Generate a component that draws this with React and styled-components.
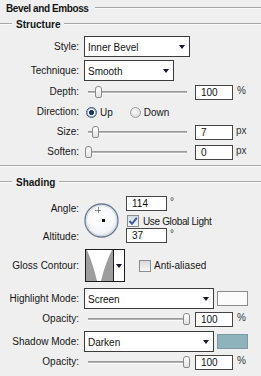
import React from 'react';
import styled, { createGlobalStyle } from 'styled-components';

const Global = createGlobalStyle`
  html, body { margin: 0; padding: 0; background: #efefef; }
  body { font-family: "Liberation Sans", Arial, sans-serif; font-size: 10px; color: #161616; }
`;

const Panel = styled.div`
  width: 261px;
  height: 376px;
  overflow: hidden;
  background: #efefef;
  display: flex;
  flex-direction: column;
`;

const lineRule = `
  content: "";
  border-top: 1px solid #a7a7a7;
  border-bottom: 1px solid #fbfbfb;
`;

const Header = styled.div`
  display: flex;
  align-items: center;
  height: 16px;
  padding-left: 6px;
  font-weight: bold;
  letter-spacing: -0.4px;
  &::after { ${lineRule} flex: 1; margin-left: 6px; }
`;

const Legend = styled.div`
  display: flex;
  align-items: center;
  height: 16px;
  font-weight: bold;
  margin-top: ${p => p.$mt || 0}px;
  &::before { ${lineRule} width: 12px; margin-right: 4px; }
  &::after { ${lineRule} flex: 1; margin-left: 4px; }
`;

const Separator = styled.div`
  margin-top: ${p => p.$mt || 0}px;
  border-top: 1px solid #a7a7a7;
  border-bottom: 1px solid #fbfbfb;
`;

const Row = styled.div`
  display: flex;
  align-items: center;
  height: ${p => p.$h || 20}px;
  margin-top: ${p => p.$mt || 0}px;
  flex: none;
`;

const Label = styled.span`
  width: 79px;
  margin-right: 5px;
  text-align: right;
  flex: none;
  padding-bottom: 1px;
  white-space: nowrap;
`;

const Select = styled.div`
  box-sizing: border-box;
  width: ${p => p.$w}px;
  height: 21px;
  border: 1px solid #3c3c3c;
  background: #fff;
  display: flex;
  align-items: center;
  justify-content: space-between;
  padding: 1px 4px 0 3px;
  color: #111;
`;

const Arrow = styled.span`
  width: 0;
  height: 0;
  border-left: 3.5px solid transparent;
  border-right: 3.5px solid transparent;
  border-top: 4px solid #161630;
`;

const Slider = styled.div`
  position: relative;
  width: 106px;
  height: 14px;
  flex: none;
`;

const Track = styled.div`
  position: absolute;
  left: 4px;
  right: 3px;
  top: 6px;
  height: 1px;
  background: #b4b4b4;
  border-top: 1px solid #9a9a9a;
  border-bottom: 1px solid #fdfdfd;
`;

const Thumb = styled.div`
  position: absolute;
  top: 1px;
  width: 7px;
  height: 12px;
  box-sizing: border-box;
  border: 1px solid #8a8a8a;
  border-radius: 3px 3px 2px 2px;
  background: linear-gradient(#ffffff, #e2e2e2);
`;

const NumBox = styled.div`
  box-sizing: border-box;
  width: ${p => p.$w || 38}px;
  height: 15px;
  margin-left: ${p => p.$ml ?? 5}px;
  border: 1px solid #454545;
  background: #fff;
  padding-left: ${p => p.$pl || 5}px;
  display: flex;
  align-items: center;
  color: #111;
  flex: none;
`;

const Unit = styled.span`
  margin-left: ${p => p.$ml ?? 4}px;
  align-self: ${p => (p.$top ? 'flex-start' : 'center')};
  padding-bottom: ${p => (p.$top ? 0 : 3)}px;
  color: #333;
`;

const Radio = styled.span`
  box-sizing: border-box;
  width: 11px;
  height: 11px;
  border-radius: 50%;
  margin-left: ${p => p.$ml || 0}px;
  flex: none;
  border: 1px solid ${p => (p.$on ? '#3d5a86' : '#9c9c9c')};
  background: ${p =>
    p.$on
      ? 'radial-gradient(circle, #1d3766 0 2.2px, #f4f6fa 2.8px 3.2px, #a8b8d0 4px)'
      : 'radial-gradient(circle at 40% 40%, #fafafa, #d4d4d4)'};
`;

const RadioText = styled.span`
  margin-left: 3px;
`;

const AngleSection = styled.div`
  display: flex;
  align-items: flex-start;
  height: 55px;
  flex: none;
`;

const LabelStack = styled.div`
  width: 79px;
  margin-right: 5px;
  display: flex;
  flex-direction: column;
  align-items: flex-end;
  padding-top: 13px;
  gap: 16px;
  line-height: 12px;
  flex: none;
`;

const DialWrap = styled.div`
  margin-top: 13px;
  width: 35px;
  height: 35px;
  flex: none;
`;

const Stack = styled.div`
  display: flex;
  flex-direction: column;
  margin-left: 7px;
  padding-top: 6px;
`;

const SubRow = styled.div`
  display: flex;
  align-items: center;
  height: ${p => p.$h || 15}px;
  margin-top: ${p => p.$mt || 0}px;
`;

const Check = styled.span`
  box-sizing: border-box;
  width: 12px;
  height: 12px;
  margin-left: ${p => p.$ml || 0}px;
  border: 1px solid #8c8c8c;
  background: ${p => (p.$on ? 'linear-gradient(#d3dbe6, #f3f5f8)' : 'linear-gradient(#d9d9d9, #f7f7f7)')};
  display: flex;
  align-items: center;
  justify-content: center;
  flex: none;
`;

const CheckText = styled.span`
  margin-left: ${p => p.$ml || 4}px;
  letter-spacing: ${p => p.$ls || 0}px;
  white-space: nowrap;
`;

const Contour = styled.div`
  box-sizing: border-box;
  width: 40px;
  height: 33px;
  margin-left: 1px;
  border: 1px solid #1c1c1c;
  background: #fff;
  display: flex;
  flex: none;
`;

const ContourArrow = styled.div`
  flex: 1;
  border-left: 1px solid #1c1c1c;
  display: flex;
  align-items: center;
  justify-content: center;
`;

const Swatch = styled.div`
  box-sizing: border-box;
  width: 31px;
  height: 15px;
  margin-left: 3px;
  border: 1px solid ${p => p.$border};
  background: ${p => p.$color};
  flex: none;
`;

function SliderControl({ pos }) {
  return (
    <Slider>
      <Track />
      <Thumb style={{ left: `${1 + pos * 98}px` }} />
    </Slider>
  );
}

function SliderRow({ label, value, pos, unit, unitMl, mt }) {
  return (
    <Row $h={20} $mt={mt}>
      <Label>{label}</Label>
      <SliderControl pos={pos} />
      <NumBox>{value}</NumBox>
      <Unit $ml={unitMl}>{unit}</Unit>
    </Row>
  );
}

function Dial() {
  return (
    <DialWrap>
      <svg width="35" height="35" viewBox="0 0 35 35">
        <defs>
          <radialGradient id="dg" cx="45%" cy="40%" r="60%">
            <stop offset="0%" stopColor="#ffffff" />
            <stop offset="75%" stopColor="#f6f7f9" />
            <stop offset="100%" stopColor="#dfe3ea" />
          </radialGradient>
        </defs>
        <circle cx="17.5" cy="17.5" r="16.5" fill="url(#dg)" stroke="#6c7a90" strokeWidth="1.3" />
        <circle cx="17.5" cy="17.5" r="15.2" fill="none" stroke="#c9cfda" strokeWidth="0.8" />
        <path d="M14.5 4.5 V10.5 M11.5 7.5 H17.5" stroke="#222" strokeWidth="1" strokeDasharray="1 1" />
        <rect x="18" y="16" width="3" height="3" fill="#111" />
      </svg>
    </DialWrap>
  );
}

function SelectBox({ w, children }) {
  return (
    <Select $w={w}>
      <span>{children}</span>
      <Arrow />
    </Select>
  );
}

function CheckMark() {
  return (
    <svg width="10" height="10" viewBox="0 0 10 10">
      <path d="M1.5 5 L4 7.8 L8.8 1.8" fill="none" stroke="#3a5b98" strokeWidth="2" />
    </svg>
  );
}

export default function App() {
  return (
    <>
      <Global />
      <Panel>
        <Header>Bevel and Emboss</Header>
        <Legend>Structure</Legend>
        <Row $h={21} $mt={4}>
          <Label>Style:</Label>
          <SelectBox w={106}>Inner Bevel</SelectBox>
        </Row>
        <Row $h={21} $mt={3}>
          <Label>Technique:</Label>
          <SelectBox w={90}>Smooth</SelectBox>
        </Row>
        <SliderRow label="Depth:" value="100" pos={0.1} unit="%" mt={1} />
        <Row $h={20}>
          <Label>Direction:</Label>
          <Radio $on $ml={2} />
          <RadioText>Up</RadioText>
          <Radio $ml={17} />
          <RadioText>Down</RadioText>
        </Row>
        <SliderRow label="Size:" value="7" pos={0.07} unit="px" unitMl={3} />
        <SliderRow label="Soften:" value="0" pos={0} unit="px" unitMl={3} />
        <Separator $mt={3} />
        <Legend $mt={7}>Shading</Legend>
        <AngleSection>
          <LabelStack>
            <span>Angle:</span>
            <span>Altitude:</span>
          </LabelStack>
          <Dial />
          <Stack>
            <SubRow>
              <NumBox $w={41} $ml={0}>114</NumBox>
              <Unit $ml={3} $top>°</Unit>
            </SubRow>
            <SubRow $h={12} $mt={4}>
              <Check $on $ml={1}><CheckMark /></Check>
              <CheckText $ls={-0.35}>Use Global Light</CheckText>
            </SubRow>
            <SubRow $mt={1}>
              <NumBox $w={41} $ml={0}>37</NumBox>
              <Unit $ml={3} $top>°</Unit>
            </SubRow>
          </Stack>
        </AngleSection>
        <Row $h={33} $mt={4}>
          <Label>Gloss Contour:</Label>
          <Contour>
            <svg width="27" height="31" viewBox="0 0 27 31">
              <rect width="27" height="31" fill="#9d9d9d" />
              <path d="M1 0 H26 Q19 14 15 31 H11 Q7 14 1 0 Z" fill="#ffffff" />
            </svg>
            <ContourArrow>
              <Arrow />
            </ContourArrow>
          </Contour>
          <Check $ml={14} />
          <CheckText $ml={3}>Anti-aliased</CheckText>
        </Row>
        <Row $h={21} $mt={6}>
          <Label>Highlight Mode:</Label>
          <SelectBox w={130}>Screen</SelectBox>
          <Swatch $color="#fbfbfb" $border="#8c8c8c" />
        </Row>
        <SliderRow label="Opacity:" value="100" pos={1} unit="%" />
        <Row $h={21} $mt={2}>
          <Label>Shadow Mode:</Label>
          <SelectBox w={130}>Darken</SelectBox>
          <Swatch $color="#8eb3bc" $border="#7d9aa2" />
        </Row>
        <SliderRow label="Opacity:" value="100" pos={1} unit="%" />
      </Panel>
    </>
  );
}
